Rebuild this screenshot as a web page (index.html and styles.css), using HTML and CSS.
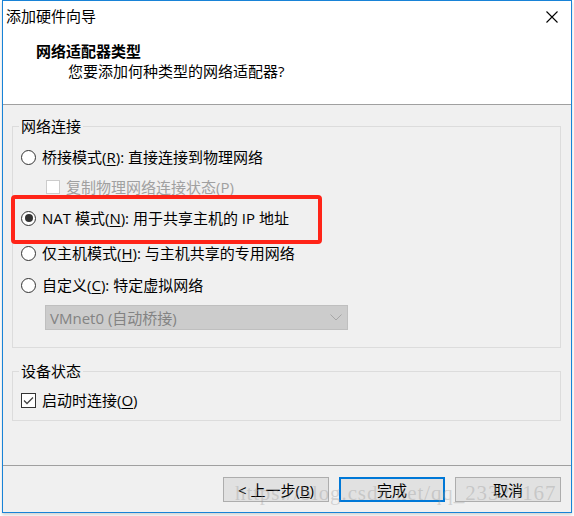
FILE: index.html
```html
<!DOCTYPE html>
<html lang="zh-CN">
<head>
<meta charset="utf-8">
<title>添加硬件向导</title>
<link rel="stylesheet" href="styles.css">
</head>
<body>
<div class="window">
  <div class="header">
    <div class="titlebar">
      <span class="title">添加硬件向导</span>
      <svg class="close" width="12" height="12" viewBox="0 0 12 12"><path d="M0.5 0.5 L11.5 11.5 M11.5 0.5 L0.5 11.5" stroke="#000" stroke-width="1.1" fill="none"/></svg>
    </div>
    <div class="heading">网络适配器类型</div>
    <div class="subtitle">您要添加何种类型的网络适配器?</div>
  </div>
  <div class="content">
    <fieldset class="group net">
      <legend>网络连接</legend>
      <div class="row r1"><span class="radio"></span><span class="label">桥接模式(<u>R</u>): 直接连接到物理网络</span></div>
      <div class="row r2"><span class="check disabled"></span><span class="label muted">复制物理网络连接状态(P)</span></div>
      <div class="row r3"><span class="radio on"></span><span class="label">NAT 模式(<u>N</u>): 用于共享主机的 IP 地址</span><span class="mark"></span></div>
      <div class="row r4"><span class="radio"></span><span class="label">仅主机模式(<u>H</u>): 与主机共享的专用网络</span></div>
      <div class="row r5"><span class="radio"></span><span class="label">自定义(<u>C</u>): 特定虚拟网络</span></div>
      <div class="select"><span>VMnet0 (自动桥接)</span><svg width="12" height="7" viewBox="0 0 12 7"><path d="M0.5 0.5 L6 6 L11.5 0.5" stroke="#a6a6a6" fill="none"/></svg></div>
    </fieldset>
    <fieldset class="group dev">
      <legend>设备状态</legend>
      <div class="row"><span class="check on"><svg width="13" height="13" viewBox="0 0 13 13"><path d="M2 6.5 L5 9.5 L11 3.5" stroke="#444" stroke-width="1.3" fill="none"/></svg></span><span class="label">启动时连接(<u>O</u>)</span></div>
    </fieldset>
  </div>
  <div class="footer">
    <button class="btn">&lt; 上一步(<u>B</u>)</button>
    <button class="btn default">完成</button>
    <button class="btn">取消</button>
    <span class="watermark">https://blog.csdn.net/qq_23329167</span>
  </div>
</div>
</body>
</html>
```
FILE: styles.css
```css
* { box-sizing: border-box; }
html, body { margin: 0; padding: 0; }
body {
  background: #fff;
  font-family: "Open Sans", "Noto Sans CJK SC", sans-serif;
  font-size: 15px;
  color: #000;
  width: 574px;
  height: 516px;
  overflow: hidden;
}
.window {
  margin-left: 2px;
  width: 570px;
  height: 513px;
  border: 1px solid #1883d7;
  background: #f0f0f0;
  box-shadow: 0 2px 3px rgba(0,0,0,0.18);
  display: flex;
  flex-direction: column;
}
.header {
  background: #fff;
  height: 104px;
  border-bottom: 1px solid #a0a0a0;
}
.titlebar {
  height: 30px;
  display: flex;
  align-items: center;
  justify-content: space-between;
  padding-left: 3px;
  padding-right: 13px;
}
.title { line-height: 30px; }
.close { display: block; margin-top: 1px; }
.heading {
  margin-top: 10px;
  padding-left: 33px;
  line-height: 20px;
  font-weight: bold;
}
.subtitle {
  padding-left: 65px;
  line-height: 20px;
}
.content {
  height: 361px;
  border-bottom: 1px solid #a0a0a0;
  padding: 0 10px 0 9px;
  display: flex;
  flex-direction: column;
}
.group {
  margin: 0;
  border: 1px solid #dcdcdc;
  padding: 6px 8px 17px 8px;
  min-width: 0;
}
.group legend {
  padding: 0 2px;
  margin-left: -2px;
  line-height: 20px;
}
.net { margin-top: 11px; }
.dev { margin-top: 13px; padding-top: 4px; padding-bottom: 5px; }
.row {
  display: flex;
  align-items: center;
  height: 30px;
  position: relative;
}
.r3 { height: 32px; }
.r4 { height: 38px; }
.r5 { height: 26px; }
.label { margin-left: 6px; line-height: 20px; white-space: nowrap; }
.label u { text-decoration-thickness: 1px; text-underline-offset: 2px; }
.muted { color: #a0a0a0; margin-left: 6px; }
.radio {
  width: 15px;
  height: 15px;
  border: 1px solid #333;
  border-radius: 50%;
  background: #fff;
  display: flex;
  align-items: center;
  justify-content: center;
  flex: none;
}
.radio.on::after {
  content: "";
  width: 8px;
  height: 8px;
  border-radius: 50%;
  background: #333;
}
.check {
  width: 15px;
  height: 15px;
  border: 1px solid #333;
  background: #fff;
  flex: none;
  display: flex;
  align-items: center;
  justify-content: center;
}
.check.disabled {
  width: 14px;
  height: 14px;
  margin-left: 25px;
  border-color: #cccccc;
}
.mark {
  position: absolute;
  left: -10px;
  top: -7px;
  width: 311px;
  height: 49px;
  border: 4px solid #ff2418;
  border-radius: 4px;
  pointer-events: none;
}
.select {
  margin-top: 7px;
  margin-left: 24px;
  width: 303px;
  height: 25px;
  background: #cccccc;
  border: 1px solid #bfbfbf;
  color: #838383;
  display: flex;
  align-items: center;
  justify-content: space-between;
  padding: 0 5px 0 4px;
  line-height: 20px;
}
.footer {
  flex: 1;
  position: relative;
  display: flex;
  justify-content: flex-end;
  align-items: flex-start;
  gap: 10px;
  padding: 11px 10px 0 0;
}
.btn {
  width: 106px;
  height: 25px;
  background: #e1e1e1;
  border: 1px solid #adadad;
  font-family: inherit;
  font-size: 15px;
  color: #000;
  padding: 0;
  line-height: 20px;
}
.btn.default { border: 2px solid #0078d7; }
.watermark {
  position: absolute;
  left: 232px;
  top: 15px;
  font-family: "Liberation Serif", serif;
  font-size: 21px;
  letter-spacing: 0.9px;
  color: rgba(150,150,150,0.35);
  white-space: nowrap;
  pointer-events: none;
}
```
